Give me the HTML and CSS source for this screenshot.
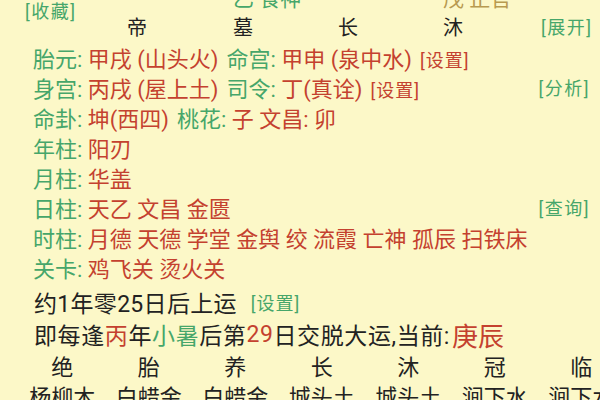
FILE: index.html
```html
<!DOCTYPE html>
<html lang="zh-CN">
<head>
<meta charset="utf-8">
<link rel="stylesheet" href="styles.css">
</head>
<body>
<div class="page">
  <div class="head">
    <div class="fav g">[收藏]</div>
    <div class="top t3 g">乙 食神</div>
    <div class="top t5 o">戊 正官</div>
    <div class="st s2">帝</div>
    <div class="st s3">墓</div>
    <div class="st s4">长</div>
    <div class="st s5">沐</div>
    <div class="act g s6">[展开]</div>
  </div>

  <div class="info">
    <div class="row"><div><span class="g">胎元: </span><span class="r v">甲戌 (山头火)</span><span class="g">命宫: </span><span class="r v">甲申 (泉中水)</span><span class="r sm">[设置]</span></div></div>
    <div class="row"><div><span class="g">身宫: </span><span class="r v">丙戌 (屋上土)</span><span class="g">司令: </span><span class="r v">丁(真诠)</span><span class="r sm">[设置]</span></div><span class="act g">[分析]</span></div>
    <div class="row"><div><span class="g">命卦: </span><span class="r v">坤(西四)</span><span class="g">桃花: </span><span class="r">子 文昌: 卯</span></div></div>
    <div class="row"><div><span class="g">年柱: </span><span class="r">阳刃</span></div></div>
    <div class="row"><div><span class="g">月柱: </span><span class="r">华盖</span></div></div>
    <div class="row"><div><span class="g">日柱: </span><span class="r">天乙 文昌 金匮</span></div><span class="act g">[查询]</span></div>
    <div class="row"><div><span class="g">时柱: </span><span class="r">月德 天德 学堂 金舆 绞 流霞 亡神 孤辰 扫铁床</span></div></div>
    <div class="row"><div><span class="g">关卡: </span><span class="r">鸡飞关 烫火关</span></div></div>
  </div>

  <div class="luck">
    <div class="row l1"><span class="v2">约1年零25日后上运</span><span class="g sm">[设置]</span></div>
    <div class="row l2">即每逢<span class="r">丙</span>年<span class="g">小暑</span>后第<span class="r">29</span>日交脱大运,当前:<span class="r big">庚辰</span></div>
  </div>

  <div class="grid7 g7a">
    <span>绝</span><span>胎</span><span>养</span><span>长</span><span>沐</span><span>冠</span><span>临</span>
  </div>
  <div class="grid7 g7b">
    <span>杨柳木</span><span>白蜡金</span><span>白蜡金</span><span>城头土</span><span>城头土</span><span>涧下水</span><span>涧下水</span>
  </div>
</div>
</body>
</html>
```

FILE: styles.css
```css
html, body {
  margin: 0;
  padding: 0;
  background: #fcf8c8;
}
body {
  width: 600px;
  height: 400px;
  overflow: hidden;
  font-family: Roboto, "Noto Sans CJK SC", sans-serif;
  color: #222;
}
.page {
  width: 600px;
}
.g { color: #46a66a; }
.r { color: #c4412f; }
.o { color: #b89a50; }
.sm { font-size: 18px; letter-spacing: 1px; }
.big { font-size: 26px; margin-left: 2px; letter-spacing: 0; }
.v { margin-right: 8px; }
.v2 { margin-right: 14px; }

.head {
  display: grid;
  grid-template-columns: 127px 106px 105px 105px 98px 1fr;
  grid-template-rows: 24px 24px;
  row-gap: 5px;
  margin-top: -13px;
  font-size: 20px;
  line-height: 24px;
}
.fav {
  grid-column: 1;
  grid-row: 1 / 3;
  align-self: start;
  margin-top: 15px;
  margin-left: 25px;
  font-size: 18px;
  line-height: 20px;
  letter-spacing: 1.5px;
}
.top { grid-row: 1; font-size: 21px; }
.t3 { grid-column: 3; }
.t5 { grid-column: 5; }
.st { grid-row: 2; }
.s2 { grid-column: 2; }
.s3 { grid-column: 3; }
.s4 { grid-column: 4; }
.s5 { grid-column: 5; }
.s6 { grid-column: 6; grid-row: 2; }
.act { font-size: 18px; letter-spacing: 1.5px; }

.info {
  margin-top: 2px;
  padding-left: 33px;
  padding-right: 10px;
  font-size: 22px;
}
.row {
  display: flex;
  justify-content: space-between;
  align-items: center;
  height: 30px;
  white-space: nowrap;
}
.luck {
  padding-left: 34px;
  font-size: 23px;
  margin-top: 4px;
}
.l1, .l2 { height: 32px; justify-content: flex-start; }
.l1 { letter-spacing: 0.3px; }
.l2 { letter-spacing: 0.6px; }

.grid7 {
  display: grid;
  grid-template-columns: repeat(7, 86.5px);
  padding-left: 19px;
  font-size: 22px;
  text-align: center;
  white-space: nowrap;
}
.g7a { height: 33px; line-height: 33px; margin-top: 1px; }
.g7b { height: 28px; line-height: 28px; }
```
